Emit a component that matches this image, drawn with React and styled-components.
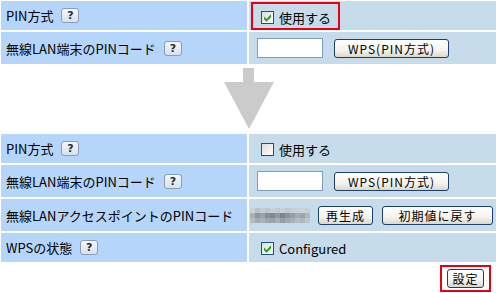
import React from 'react'
import styled, { createGlobalStyle } from 'styled-components'

const GlobalStyle = createGlobalStyle`
  body {
    margin: 0;
    background: #fff;
    font-family: "Noto Sans CJK JP", "Liberation Sans", sans-serif;
    font-size: 13px;
    color: #000;
  }
`

const Page = styled.div`
  width: 495px;
  padding: 1px 0 0 1px;
`

const Table = styled.div`
  display: grid;
  grid-template-columns: 246px 1fr;
  gap: 2px;
`

const LabelCell = styled.div`
  height: ${p => p.h}px;
  background: #b5d5fb;
  display: flex;
  align-items: center;
  padding-left: 5px;
  gap: 8px;
  white-space: nowrap;
`

const ValueCell = styled.div`
  height: ${p => p.h}px;
  background: #c6dcea;
  display: flex;
  align-items: center;
  padding-left: 8px;
  white-space: nowrap;
`

const Help = styled.span`
  width: 16px;
  height: 13px;
  border: 1px solid #8b9cb3;
  border-radius: 3px;
  background: linear-gradient(#f4f7fb, #d6e2ef);
  display: inline-flex;
  align-items: center;
  justify-content: center;
  font-family: "DejaVu Sans", sans-serif;
  font-weight: bold;
  font-size: 11px;
  color: #2a2a2a;
`

const Check = styled.label`
  display: flex;
  align-items: center;
  gap: 5px;
  padding-left: 4px;
  padding-top: ${p => p.low ? 3 : 1}px;
`

const Highlight = styled.div`
  display: flex;
  align-items: center;
  height: 24px;
  margin-left: -6px;
  padding: 0 7px 0 4px;
  border: 2px solid #e60012;
`

const Box = styled.svg`
  flex: none;
`

const Input = styled.input`
  box-sizing: border-box;
  width: 66px;
  height: 20px;
  border: 1px solid #7f9db9;
  background: #fff;
  margin: 0 11px 0 0;
`

const Button = styled.button`
  box-sizing: border-box;
  width: ${p => p.w}px;
  height: 19px;
  margin-right: ${p => p.mr || 0}px;
  padding: 0;
  border: 1px solid #1d3f6e;
  border-radius: 3px;
  background: linear-gradient(#ffffff 0%, #f4f3ee 60%, #dcd8cc 100%);
  font-family: "Noto Sans CJK JP", sans-serif;
  font-size: 12px;
  letter-spacing: ${p => p.ls || 0}px;
  line-height: 17px;
  color: #000;
`

const Blur = styled.svg`
  margin: 0 8px 0 -7px;
  flex: none;
`

const ArrowArea = styled.div`
  height: 70px;
  display: flex;
  justify-content: center;
  align-items: flex-start;
  padding-left: 1px;
`

const Arrow = styled.svg`
  margin-top: 4px;
`

const Footer = styled.div`
  display: flex;
  justify-content: flex-end;
  padding: 3px 5px 0 0;
`

const FooterMark = styled.div`
  border: 2px solid #e60012;
  padding: 2px 5px;
  display: flex;
`

const CheckBox = ({ checked }) => (
  <Box width="13" height="13" viewBox="0 0 13 13">
    <defs>
      <linearGradient id="cb" x1="0" y1="0" x2="1" y2="1">
        <stop offset="0" stopColor="#dcdcd7" />
        <stop offset="1" stopColor="#ffffff" />
      </linearGradient>
    </defs>
    <rect x="0.5" y="0.5" width="12" height="12" fill="url(#cb)" stroke="#1c5180" />
    {checked && <path d="M3 5.5 L5.5 8 L10 3.3 L10 6.3 L5.5 10.8 L3 8.3 Z" fill="#21a121" />}
  </Box>
)

const BlurredPin = () => {
  const shades = [
    ['#c9d3da', '#b9c3cb', '#c3cdd4', '#bcc6cd', '#c6d0d7', '#c0cad1', '#c8d2d9', '#bec8cf', '#c5cfd6', '#c7d1d8', '#c9d3da', '#c6d0d7'],
    ['#a7b0b7', '#8e979e', '#9aa3aa', '#868f96', '#7e878e', '#9099a0', '#7c858c', '#8a9399', '#959ea5', '#a3acb3', '#9ca5ac', '#b0b9c0'],
    ['#b4bdc4', '#a2abb2', '#a9b2b9', '#9ea7ae', '#98a1a8', '#a6afb6', '#959ea5', '#a0a9b0', '#a8b1b8', '#b2bbc2', '#adb6bd', '#bcc5cc'],
  ]
  return (
    <Blur width="60" height="15" viewBox="0 0 60 15">
      {shades.map((row, r) => row.map((c, i) => (
        <rect key={r + '-' + i} x={i * 5} y={r * 5} width="5" height="5" fill={c} />
      )))}
    </Blur>
  )
}

export default function App() {
  return (
    <Page>
      <GlobalStyle />
      <Table>
        <LabelCell h={29}>PIN方式<Help>?</Help></LabelCell>
        <ValueCell h={29}>
          <Highlight>
            <Check low>
              <CheckBox checked />
              <span>使用する</span>
            </Check>
          </Highlight>
        </ValueCell>
        <LabelCell h={32}>無線LAN端末のPINコード<Help>?</Help></LabelCell>
        <ValueCell h={32}>
          <Input />
          <Button w={115} ls={1}>WPS(PIN方式)</Button>
        </ValueCell>
      </Table>

      <ArrowArea>
        <Arrow width="50" height="61" viewBox="0 0 50 61">
          <rect x="19" y="0" width="11" height="15" fill="#cbcbcb" />
          <polygon points="0,14 50,14 25,61" fill="#cbcbcb" />
        </Arrow>
      </ArrowArea>

      <Table>
        <LabelCell h={29}>PIN方式<Help>?</Help></LabelCell>
        <ValueCell h={29}>
          <Check>
            <CheckBox />
            <span>使用する</span>
          </Check>
        </ValueCell>
        <LabelCell h={32}>無線LAN端末のPINコード<Help>?</Help></LabelCell>
        <ValueCell h={32}>
          <Input />
          <Button w={115} ls={1}>WPS(PIN方式)</Button>
        </ValueCell>
        <LabelCell h={32}>無線LANアクセスポイントのPINコード</LabelCell>
        <ValueCell h={32}>
          <BlurredPin />
          <Button w={55} mr={9} ls={1}>再生成</Button>
          <Button w={111} ls={1}>初期値に戻す</Button>
        </ValueCell>
        <LabelCell h={29}>WPSの状態<Help>?</Help></LabelCell>
        <ValueCell h={29}>
          <Check>
            <CheckBox checked />
            <span>Configured</span>
          </Check>
        </ValueCell>
      </Table>

      <Footer>
        <FooterMark>
          <Button w={37} ls={1}>設定</Button>
        </FooterMark>
      </Footer>
    </Page>
  )
}
